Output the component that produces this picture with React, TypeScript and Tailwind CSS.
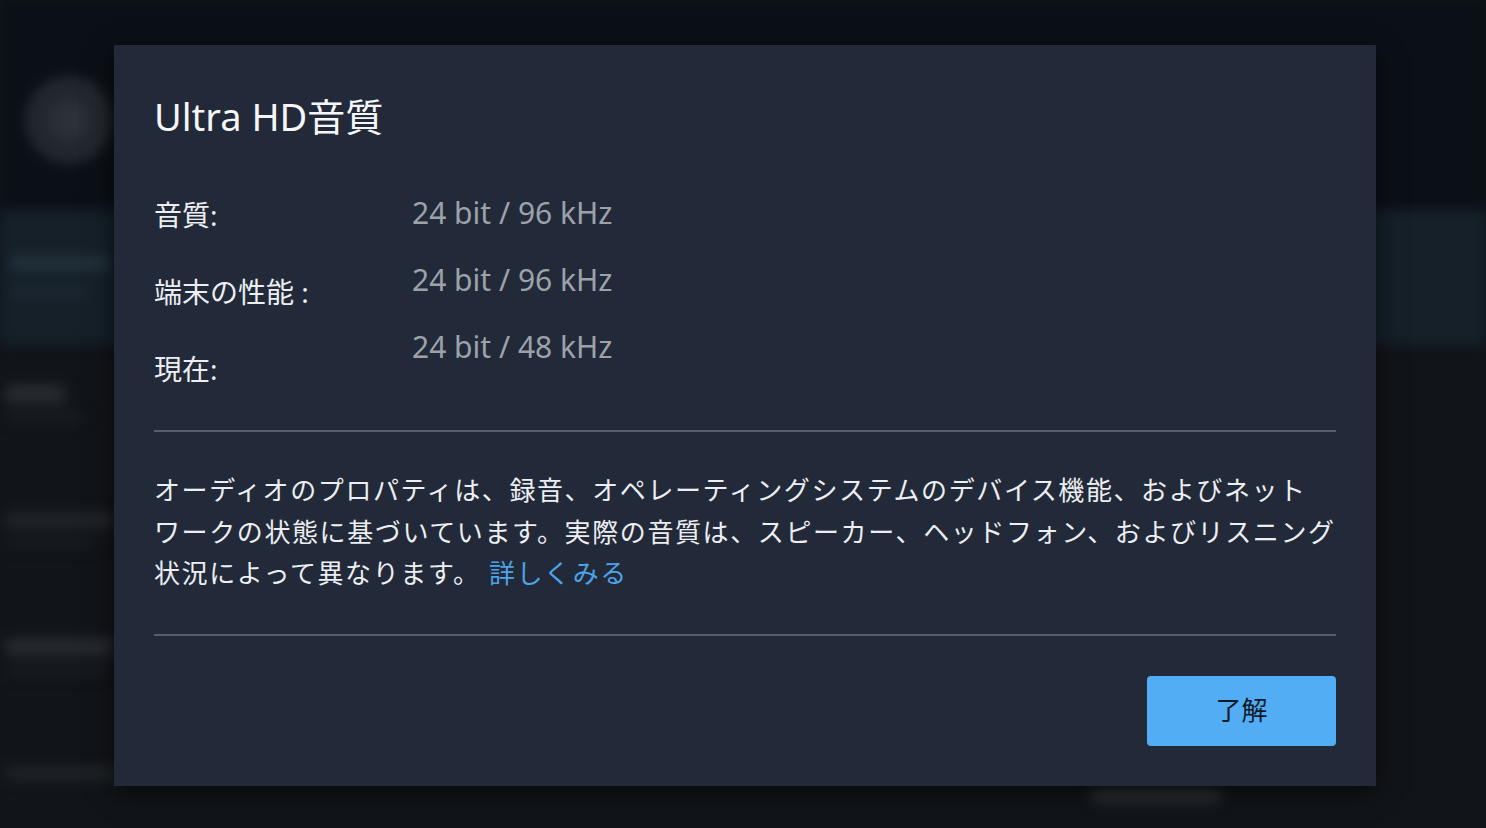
import React from "react";

const jp = "font-['Noto_Sans','Noto_Sans_CJK_JP',sans-serif]";

const BackgroundPage = () => {
    return (
        <div className="absolute inset-0 flex flex-col bg-[#111419] overflow-hidden">
            <div className="h-[210px] bg-[#0b1017] flex items-start pt-[76px] px-[25px] blur-[6px]">
                <div className="w-[88px] h-[88px] rounded-full bg-[#22272e] flex items-center justify-center">
                    <div className="w-[40px] h-[40px] rounded-full bg-[#2c3138]" />
                </div>
            </div>
            <div className="h-[135px] bg-[#152029] px-[10px] pt-[45px] blur-[6px]">
                <div className="w-[100px] h-[16px] rounded bg-[#223039]" />
                <div className="w-[80px] h-[10px] rounded bg-[#1c2731] mt-[16px]" />
            </div>
            <div className="flex-1 flex flex-col gap-[92px] px-[5px] pt-[40px] blur-[7px]">
                <div>
                    <div className="w-[60px] h-[18px] rounded bg-[#2a2d33]" />
                    <div className="w-[80px] h-[8px] rounded bg-[#1c1f24] mt-[10px]" />
                </div>
                <div>
                    <div className="w-[110px] h-[14px] rounded bg-[#25282d]" />
                    <div className="w-[90px] h-[8px] rounded bg-[#1b1e23] mt-[12px]" />
                </div>
                <div>
                    <div className="w-[110px] h-[16px] rounded bg-[#2a2d33]" />
                    <div className="w-[100px] h-[8px] rounded bg-[#1c1f24] mt-[12px]" />
                </div>
                <div className="flex justify-between pr-[260px]">
                    <div className="w-[120px] h-[12px] rounded bg-[#23262b]" />
                    <div className="w-[130px] h-[12px] rounded bg-[#34363a] mt-[22px]" />
                </div>
            </div>
        </div>
    );
};

const InfoRows = () => {
    return (
        <div className="flex mt-[52px]">
            <div className="w-[258px] flex flex-col gap-[40px] pt-[7px] text-[28px] leading-[37px] text-[#eceef1]">
                <span>音質:</span>
                <span>端末の性能 :</span>
                <span>現在:</span>
            </div>
            <div className="flex flex-col gap-[30px] text-[30px] leading-[37px] text-[#9da2aa] pt-[4px]">
                <span>24 bit / 96 kHz</span>
                <span>24 bit / 96 kHz</span>
                <span>24 bit / 48 kHz</span>
            </div>
        </div>
    );
};

export default function App() {
    return (
        <div className={`relative w-[1486px] h-[828px] overflow-hidden ${jp}`}>
            <BackgroundPage />
            <div className="absolute left-[114px] top-[45px] w-[1262px] h-[741px] bg-[#222a3a] shadow-[0_6px_24px_rgba(0,0,0,0.6)] px-[40px] pt-[49px] flex flex-col">
                <h2 className="text-[38px] leading-[44px] text-[#f5f6f8] font-normal">Ultra HD音質</h2>
                <InfoRows />
                <div className="h-[2px] bg-[#565e6c] mt-[42px]" />
                <p className="mt-[38px] whitespace-nowrap text-[26px] leading-[41.5px] tracking-[1.6px] text-[#eceef1]">
                    オーディオのプロパティは、録音、オペレーティングシステムのデバイス機能、およびネット<br />
                    ワークの状態に基づいています。実際の音質は、スピーカー、ヘッドフォン、およびリスニング<br />
                    状況によって異なります。 <span className="text-[#4da3e6]">詳しくみる</span>
                </p>
                <div className="h-[2px] bg-[#565e6c] mt-[39px]" />
                <div className="flex justify-end mt-[40px]">
                    <button className="w-[189px] h-[70px] rounded-[4px] bg-[#52adf4] text-[26px] text-[#0f1a28]">
                        了解
                    </button>
                </div>
            </div>
        </div>
    );
}
